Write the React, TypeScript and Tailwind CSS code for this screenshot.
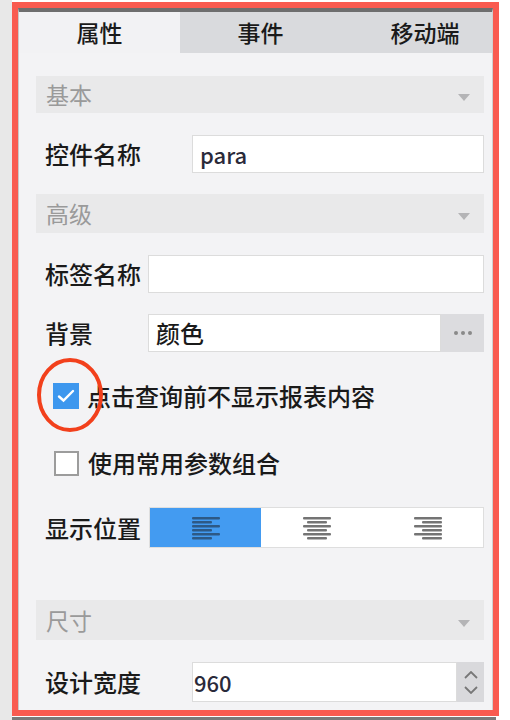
import React from "react"

const font = { fontFamily: '"Noto Sans CJK SC", "Noto Sans", sans-serif' }

function Caret() {
  return (
    <svg width="12" height="7" viewBox="0 0 12 7" className="mt-[6px]">
      <path d="M0 0 L12 0 L6 7 Z" fill="#b4b4b6" />
    </svg>
  )
}

function SectionHeader({ title, h }: { title: string; h: string }) {
  return (
    <div className={`flex items-center justify-between bg-[#e9e9ea] pl-[10px] pr-[14px] ${h}`}>
      <span className="text-[23px] leading-none text-[#9a9a9a]">{title}</span>
      <Caret />
    </div>
  )
}

function AlignIcon({ kind, color }: { kind: "left" | "center" | "right"; color: string }) {
  const rows = [0, 1, 2, 3, 4, 5]
  return (
    <svg width="28" height="24" viewBox="0 0 28 24">
      {rows.map((i) => {
        const w = i % 2 === 0 ? 28 : 20
        const x = kind === "left" ? 0 : kind === "center" ? (28 - w) / 2 : 28 - w
        return <rect key={i} x={x} y={i * 4 + 1} width={w} height="2.6" rx="1" fill={color} />
      })}
    </svg>
  )
}

export default function App() {
  return (
    <div className="w-[510px] h-[720px] bg-white flex overflow-hidden" style={font}>
      {/* grey strip on the left of the shot */}
      <div className="w-[12px] h-full bg-[#e8e8e8] shrink-0" />

      {/* red annotation frame */}
      <div className="relative mt-[2px] w-[487px] h-[714px] border-[6px] border-[#f95b50] bg-[#f3f3f5] flex flex-col">
        <div className="flex-1 flex flex-col border-t-[4px] border-t-[#6e6e6e] border-l border-l-[#c8c8c8] border-r border-r-[#d0d0d0] overflow-hidden">
          {/* tabs */}
          <div className="flex h-[41px] shrink-0 w-[490px]">
            <div className="w-[161px] flex items-center justify-center bg-[#f2f2f4] text-[23px] font-medium text-[#1a1a1a]">属性</div>
            <div className="w-[161px] flex items-center justify-center bg-[#d9dadd] text-[23px] font-medium text-[#1a1a1a]">事件</div>
            <div className="w-[168px] flex items-center justify-center bg-[#d9dadd] text-[23px] font-medium text-[#1a1a1a]">移动端</div>
          </div>

          <div className="flex flex-col pl-[17px] pr-[8px]">
            <div className="mt-[23px]">
              <SectionHeader title="基本" h="h-[37px]" />
            </div>

            <div className="mt-[22px] h-[38px] flex items-center pl-[9px]">
              <span className="w-[147px] text-[24px] leading-none font-medium text-[#1a1a1a]">控件名称</span>
              <div className="flex-1 h-full bg-white border border-[#dcdcdc] flex items-center pl-[7px] text-[22px] font-medium text-[#2a2a3a]">para</div>
            </div>

            <div className="mt-[21px]">
              <SectionHeader title="高级" h="h-[39px]" />
            </div>

            <div className="mt-[22px] h-[38px] flex items-center pl-[9px]">
              <span className="w-[103px] text-[24px] leading-none font-medium text-[#1a1a1a]">标签名称</span>
              <div className="flex-1 h-full bg-white border border-[#dcdcdc]" />
            </div>

            <div className="mt-[21px] h-[38px] flex items-center pl-[9px]">
              <span className="w-[103px] text-[24px] leading-none font-medium text-[#1a1a1a]">背景</span>
              <div className="flex-1 h-full bg-white border border-[#dcdcdc] flex items-center pl-[7px] text-[24px] font-medium text-[#1a1a1a]">颜色</div>
              <div className="w-[43px] h-full bg-[#dcdcdf] flex items-center justify-center gap-[3px]">
                <span className="w-[4px] h-[4px] rounded-full bg-[#8a8a8a]" />
                <span className="w-[4px] h-[4px] rounded-full bg-[#8a8a8a]" />
                <span className="w-[4px] h-[4px] rounded-full bg-[#8a8a8a]" />
              </div>
            </div>

            <div className="mt-[31px] h-[26px] flex items-center pl-[17px]">
              <div className="w-[26px] h-[26px] bg-[#3d97ee] flex items-center justify-center">
                <svg width="18" height="14" viewBox="0 0 18 14">
                  <path d="M2 7.5 L6.5 11.5 L16 2" stroke="#fff" strokeWidth="2.4" fill="none" strokeLinecap="round" />
                </svg>
              </div>
              <span className="ml-[8px] text-[24px] leading-none font-medium text-[#1a1a1a]">点击查询前不显示报表内容</span>
            </div>

            <div className="mt-[41px] h-[26px] flex items-center pl-[18px]">
              <div className="w-[25px] h-[25px] bg-white border-2 border-[#9c9c9c]" />
              <span className="ml-[9px] text-[24px] leading-none font-medium text-[#1a1a1a]">使用常用参数组合</span>
            </div>

            <div className="mt-[31px] h-[41px] flex items-center pl-[9px]">
              <span className="w-[104px] text-[24px] leading-none font-medium text-[#1a1a1a]">显示位置</span>
              <div className="flex-1 h-full flex border border-[#dedede] bg-white">
                <div className="w-[111px] h-full bg-[#439bf1] flex items-center justify-center">
                  <AlignIcon kind="left" color="#2d5986" />
                </div>
                <div className="w-[111px] h-full flex items-center justify-center">
                  <AlignIcon kind="center" color="#747474" />
                </div>
                <div className="flex-1 h-full flex items-center justify-center">
                  <AlignIcon kind="right" color="#747474" />
                </div>
              </div>
            </div>

            <div className="mt-[52px]">
              <SectionHeader title="尺寸" h="h-[40px]" />
            </div>

            <div className="mt-[22px] h-[40px] flex items-center pl-[9px]">
              <span className="w-[147px] text-[24px] leading-none font-medium text-[#1a1a1a]">设计宽度</span>
              <div className="flex-1 h-full bg-white border border-[#dcdcdc] flex items-center pl-[1px] text-[22px] font-medium text-[#2a2a3a]">960</div>
              <div className="w-[27px] h-full bg-[#d9d9dc] flex flex-col items-center justify-center gap-[7px]">
                <svg width="14" height="8" viewBox="0 0 14 8">
                  <path d="M1 7 L7 1 L13 7" stroke="#777" strokeWidth="1.8" fill="none" />
                </svg>
                <svg width="14" height="8" viewBox="0 0 14 8">
                  <path d="M1 1 L7 7 L13 1" stroke="#777" strokeWidth="1.8" fill="none" />
                </svg>
              </div>
            </div>
          </div>
        </div>

        {/* red circle annotation around the checkbox */}
        <svg className="absolute left-[17px] top-[348px] pointer-events-none" width="70" height="78" viewBox="0 0 70 78">
          <ellipse cx="35" cy="39" rx="31" ry="35" stroke="#f2401c" strokeWidth="4" fill="none" />
        </svg>
      </div>

      {/* dark line under the frame */}
      <div className="absolute left-[12px] top-[717px] w-[484px] h-[3px] bg-[#7a7a7a]" />
    </div>
  )
}
